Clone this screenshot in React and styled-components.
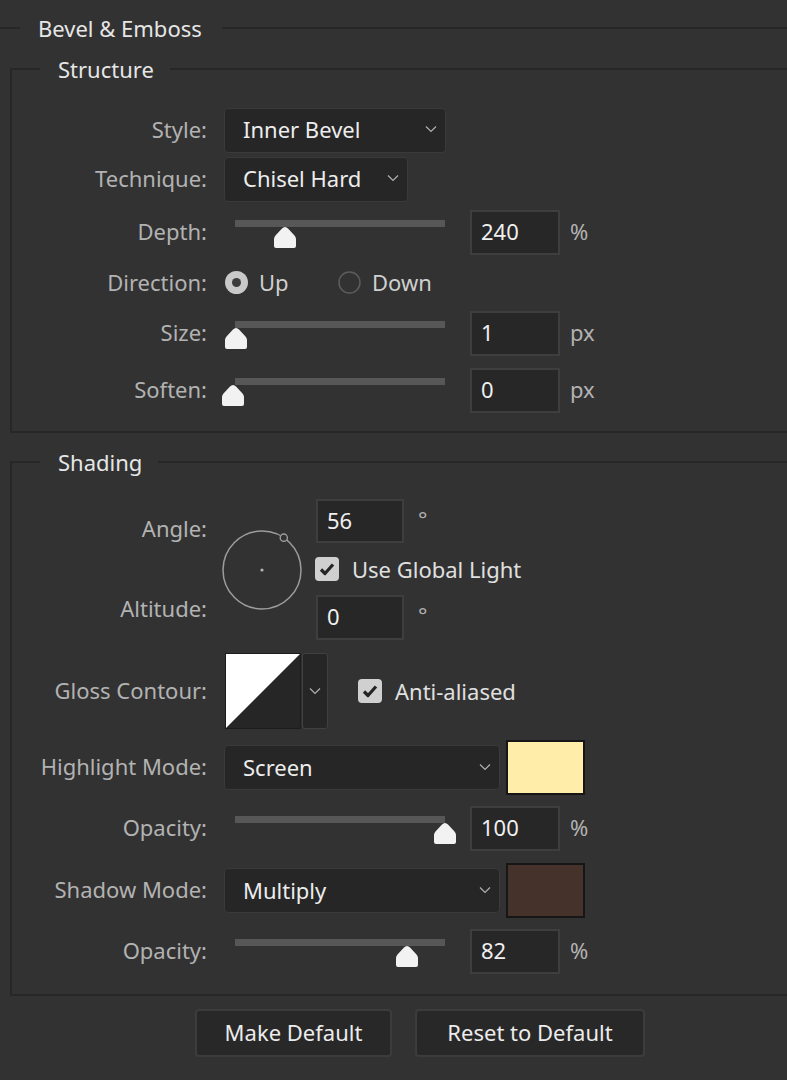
import React from 'react';
import styled, { createGlobalStyle } from 'styled-components';

const GlobalStyle = createGlobalStyle`
  html, body {
    margin: 0;
    background: #323232;
  }
  body {
    overflow: hidden;
    font-family: "Noto Sans", "Liberation Sans", sans-serif;
  }
`;

const Page = styled.div`
  box-sizing: border-box;
  width: 787px;
  height: 1080px;
  overflow: hidden;
  padding-top: 13px;
  background: #323232;
  font-size: 22px;
  line-height: 30px;
  color: #b2b2b2;
`;

const Group = styled.fieldset`
  min-width: 0;
  margin: 0 -40px 0 0;
  padding: 0;
  border: none;
  border-top: 2px solid #272727;
`;

const GroupTitle = styled.legend`
  margin-left: 20px;
  padding: 0 20px 0 18px;
  line-height: 30px;
  color: #e6e6e6;
`;

const Section = styled.fieldset`
  min-width: 0;
  margin: ${p => p.$top}px -40px 0 10px;
  padding: ${p => p.$pt}px 0 ${p => p.$pb}px 0;
  border: 2px solid #272727;
`;

const SectionTitle = styled.legend`
  margin-left: 28px;
  padding: 0 16px 0 18px;
  line-height: 30px;
  color: #e6e6e6;
`;

const Row = styled.div`
  display: flex;
  align-items: center;
  height: ${p => p.$h}px;
  margin-top: ${p => p.$mt || 0}px;
`;

const Label = styled.div`
  flex: none;
  width: 195px;
  margin-right: 17px;
  padding-bottom: 3px;
  text-align: right;
`;

const Select = styled.div`
  display: flex;
  align-items: center;
  justify-content: space-between;
  box-sizing: border-box;
  width: ${p => p.$w}px;
  height: 45px;
  padding: 0 8px 2px 18px;
  background: #262626;
  border: 1px solid #3a3a3a;
  border-radius: 4px;
  color: #ededed;
`;

const NumBox = styled.div`
  box-sizing: border-box;
  width: ${p => p.$w || 90}px;
  height: ${p => p.$h || 45}px;
  padding: 0 0 3px 9px;
  background: #272727;
  border: 2px solid #3e3e3e;
  color: #f0f0f0;
  display: flex;
  align-items: center;
`;

const Unit = styled.span`
  margin-left: ${p => p.$ml || 10}px;
  margin-top: ${p => (p.$raised ? 4 : 0)}px;
  padding-bottom: ${p => (p.$raised ? 0 : 3)}px;
  color: #b2b2b2;
  align-self: ${p => (p.$raised ? 'flex-start' : 'center')};
`;

const SliderBox = styled.div`
  position: relative;
  flex: none;
  width: 236px;
  height: 45px;
  margin-right: 10px;
`;

const Track = styled.div`
  position: absolute;
  left: 11px;
  top: 10px;
  width: 210px;
  height: 7px;
  background: #575757;
`;

const ThumbMark = styled.svg`
  position: absolute;
  top: 16px;
  margin-left: -12px;
`;

const Option = styled.label`
  display: flex;
  align-items: center;
  gap: 10px;
  width: ${p => p.$w}px;
  padding-bottom: 2px;
  color: #cfcfcf;
`;

const CheckRow = styled.label`
  display: flex;
  align-items: center;
  gap: 13px;
  margin-left: ${p => p.$ml || 0}px;
  color: #e0e0e0;
`;

const AngleBlock = styled.div`
  display: flex;
  height: 141px;
`;

const LabelStack = styled.div`
  display: flex;
  flex-direction: column;
  gap: 50px;
  flex: none;
  width: 195px;
  padding-top: 14px;
  text-align: right;
`;

const Dial = styled.svg`
  align-self: center;
  margin-left: 13px;
  margin-right: 12px;
`;

const AngleInputs = styled.div`
  display: flex;
  flex-direction: column;
  justify-content: space-between;
`;

const InputLine = styled.div`
  display: flex;
  align-items: stretch;
  height: ${p => p.$h}px;
`;

const Contour = styled.svg`
  flex: none;
  margin-left: 1px;
`;

const ContourMenu = styled.div`
  box-sizing: border-box;
  display: flex;
  align-items: center;
  justify-content: center;
  width: 26px;
  height: 76px;
  margin-left: 1px;
  background: #262626;
  border: 1px solid #404040;
  border-radius: 3px;
`;

const Swatch = styled.div`
  box-sizing: border-box;
  width: 79px;
  height: 55px;
  margin-left: 6px;
  background: ${p => p.$color};
  border: 2px solid #161616;
`;

const Buttons = styled.div`
  display: flex;
  gap: 23px;
  margin-top: 13px;
  padding-left: 195px;
`;

const Button = styled.button`
  box-sizing: border-box;
  width: ${p => p.$w}px;
  height: 48px;
  padding-bottom: 3px;
  background: #282828;
  border: 2px solid #3c3c3c;
  border-radius: 4px;
  font-family: inherit;
  font-size: 22px;
  color: #ececec;
`;

function Chevron() {
  return (
    <svg width="12" height="8" viewBox="0 0 12 8">
      <polyline points="1,1.5 6,6.5 11,1.5" fill="none" stroke="#b0b0b0" strokeWidth="1.2" />
    </svg>
  );
}

function Slider({ value }) {
  return (
    <SliderBox>
      <Track />
      <ThumbMark width="24" height="23" viewBox="0 0 24 23" style={{ left: 11 + value * 210 }}>
        <path d="M12 1 Q13.5 1 15 2.5 L21.5 9.5 Q23 11 23 13 V20 Q23 22 21 22 H3 Q1 22 1 20 V13 Q1 11 2.5 9.5 L9 2.5 Q10.5 1 12 1 Z" fill="#f2f2f2" />
      </ThumbMark>
    </SliderBox>
  );
}

function SliderRow({ label, value, number, unit, mt }) {
  return (
    <Row $h={45} $mt={mt}>
      <Label>{label}</Label>
      <Slider value={value} />
      <NumBox>{number}</NumBox>
      <Unit>{unit}</Unit>
    </Row>
  );
}

function Radio({ on }) {
  return (
    <svg width="25" height="25" viewBox="0 0 25 25">
      {on ? (
        <>
          <circle cx="12.5" cy="12.5" r="11.5" fill="#c9c9c9" />
          <circle cx="12.5" cy="12.5" r="4.5" fill="#3c3c3c" />
        </>
      ) : (
        <circle cx="12.5" cy="12.5" r="10.5" fill="none" stroke="#5c5c5c" strokeWidth="1.5" />
      )}
    </svg>
  );
}

function Check() {
  return (
    <svg width="24" height="24" viewBox="0 0 24 24">
      <rect x="0" y="0" width="24" height="24" rx="4" fill="#d0d0d0" />
      <path d="M6 12.5 L10 16.5 L18 7.5" fill="none" stroke="#252525" strokeWidth="3.2" strokeLinejoin="round" />
    </svg>
  );
}

export default function App() {
  const angle = (56 * Math.PI) / 180;
  const hx = 42 + 39 * Math.cos(angle);
  const hy = 42 - 39 * Math.sin(angle);

  return (
    <Page>
      <GlobalStyle />
      <Group>
        <GroupTitle>Bevel &amp; Emboss</GroupTitle>

        <Section $top={11} $pt={24} $pb={18}>
          <SectionTitle>Structure</SectionTitle>
          <Row $h={44}>
            <Label>Style:</Label>
            <Select $w={222}>Inner Bevel<Chevron /></Select>
          </Row>
          <Row $h={44} $mt={5}>
            <Label>Technique:</Label>
            <Select $w={184}>Chisel Hard<Chevron /></Select>
          </Row>
          <SliderRow label="Depth:" value={0.24} number="240" unit="%" mt={9} />
          <Row $h={42} $mt={7}>
            <Label>Direction:</Label>
            <Option $w={113}><Radio on />Up</Option>
            <Option $w={150}><Radio />Down</Option>
          </Row>
          <SliderRow label="Size:" value={0.004} number="1" unit="px" mt={7} />
          <SliderRow label="Soften:" value={-0.01} number="0" unit="px" mt={12} />
        </Section>

        <Section $top={14} $pt={22} $pb={20}>
          <SectionTitle>Shading</SectionTitle>
          <AngleBlock>
            <LabelStack>
              <span>Angle:</span>
              <span>Altitude:</span>
            </LabelStack>
            <Dial width="84" height="84" viewBox="0 0 84 84">
              <circle cx="42" cy="42" r="39" fill="none" stroke="#9c9c9c" strokeWidth="1.5" />
              <circle cx="42" cy="42" r="1.6" fill="#b5b5b5" />
              <circle cx={hx} cy={hy} r="3.6" fill="#323232" stroke="#9c9c9c" strokeWidth="1.4" />
            </Dial>
            <AngleInputs>
              <InputLine $h={44}>
                <NumBox $w={88} $h={44}>56</NumBox>
                <Unit $ml={14} $raised>°</Unit>
              </InputLine>
              <CheckRow $ml={-1}><Check />Use Global Light</CheckRow>
              <InputLine $h={45}>
                <NumBox $w={88}>0</NumBox>
                <Unit $ml={14} $raised>°</Unit>
              </InputLine>
            </AngleInputs>
          </AngleBlock>

          <Row $h={76} $mt={13}>
            <Label>Gloss Contour:</Label>
            <Contour width="76" height="76" viewBox="0 0 76 76">
              <rect x="0" y="0" width="76" height="76" fill="#262626" />
              <polygon points="1,1 75,1 1,75" fill="#ffffff" />
              <rect x="0.5" y="0.5" width="75" height="75" fill="none" stroke="#1c1c1c" />
            </Contour>
            <ContourMenu><Chevron /></ContourMenu>
            <CheckRow $ml={30}><Check />Anti-aliased</CheckRow>
          </Row>

          <Row $h={55} $mt={11}>
            <Label>Highlight Mode:</Label>
            <Select $w={276}>Screen<Chevron /></Select>
            <Swatch $color="#ffeda9" />
          </Row>
          <SliderRow label="Opacity:" value={1} number="100" unit="%" mt={11} />
          <Row $h={55} $mt={12}>
            <Label>Shadow Mode:</Label>
            <Select $w={276}>Multiply<Chevron /></Select>
            <Swatch $color="#45322a" />
          </Row>
          <SliderRow label="Opacity:" value={0.82} number="82" unit="%" mt={11} />
        </Section>
      </Group>

      <Buttons>
        <Button $w={197}>Make Default</Button>
        <Button $w={230}>Reset to Default</Button>
      </Buttons>
    </Page>
  );
}
